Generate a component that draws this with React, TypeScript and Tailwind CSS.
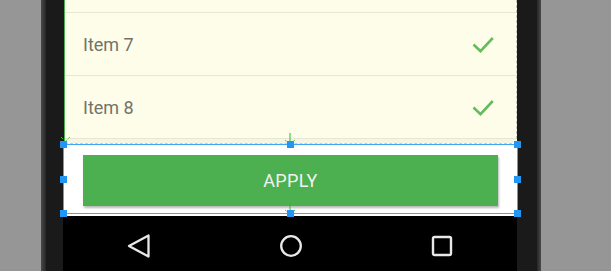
import React from 'react';

const items = ['Item 7', 'Item 8'];

function Check() {
  return (
    <svg width="22" height="17" viewBox="0 0 22 17" fill="none">
      <polyline points="1.5,8.5 8.5,15.2 20.8,2" stroke="#66bb5c" strokeWidth="2.6" />
    </svg>
  );
}

function Handle({ className }: { className: string }) {
  return <div className={`absolute h-[7px] w-[7px] bg-[#2196f3] ${className}`} />;
}

function Anchor({ className }: { className: string }) {
  // little constraint arrow drawn by the layout editor
  return (
    <svg className={`absolute ${className}`} width="14" height="11" viewBox="0 0 14 11" fill="none">
      <line x1="7" y1="0" x2="7" y2="10" stroke="#2eb82e" strokeWidth="1" />
      <line x1="2" y1="7" x2="5" y2="9.5" stroke="#2eb82e" strokeWidth="1" strokeDasharray="1 1" />
      <line x1="12" y1="7" x2="9" y2="9.5" stroke="#2eb82e" strokeWidth="1" strokeDasharray="1 1" />
    </svg>
  );
}

export default function App() {
  return (
    <div className="flex h-[271px] w-[611px] overflow-hidden bg-[#969696]" style={{ fontFamily: 'Roboto, "Noto Sans", sans-serif' }}>
      <div className="w-[41px] shrink-0" />
      <div className="w-[5px] shrink-0 bg-gradient-to-r from-[#4a4a4a] to-[#262626]" />
      <div className="w-[17px] shrink-0 bg-[#1a1a1a]" />

      {/* device screen */}
      <div className="relative flex w-[454px] shrink-0 flex-col">
        <div className="flex h-[144px]">
          <div className="w-[1px] bg-[#1a1a1a]" />
          <div className="w-[1px] bg-[#4caf50]" />
          <div className="flex flex-1 flex-col border-b border-r border-dashed border-b-[#cfcfbd] border-r-[#c6c6b8] bg-[#fdfdea]">
            <div className="h-[12px] shrink-0" />
            {items.map((item) => (
              <div key={item} className="flex h-[63px] shrink-0 items-center justify-between border-t border-[#e7e7d3] pl-[18px] pr-[22px]">
                <span className="text-[18px] text-[#737369]">{item}</span>
                <Check />
              </div>
            ))}
            <div className="flex-1 border-t border-[#e7e7d3] bg-[#f5f5e3]" />
          </div>
        </div>

        <div className="h-[72px] bg-white pl-[20px] pr-[19px] pt-[11px]">
          <button className="flex h-[51px] w-full items-center justify-center bg-[#4caf50] text-[18px] tracking-[0.3px] text-[#f2f2f2] shadow-[1px_2px_2px_rgba(0,0,0,0.28)]">
            APPLY
          </button>
        </div>

        <div className="flex flex-1 items-center justify-around bg-black pt-[5px]">
          <svg width="24" height="24" viewBox="0 0 24 24" fill="none">
            <polygon points="2,12 21.5,1.5 21.5,22.5" stroke="#e8e8e8" strokeWidth="2.3" strokeLinejoin="round" />
          </svg>
          <svg width="24" height="24" viewBox="0 0 24 24" fill="none">
            <circle cx="12" cy="12" r="9.8" stroke="#e8e8e8" strokeWidth="2.3" />
          </svg>
          <svg width="22" height="22" viewBox="0 0 22 22" fill="none">
            <rect x="2" y="2" width="18" height="18" rx="1.5" stroke="#e8e8e8" strokeWidth="2.4" />
          </svg>
        </div>

        {/* selection box of the layout editor */}
        <div className="pointer-events-none absolute left-0 top-[144px] h-[70px] w-[455px] border border-[#3fa7f5]" />
        <Anchor className="left-[220px] top-[133px]" />
        <Anchor className="left-[220px] top-[203px]" />
        <svg className="absolute left-[-4px] top-[136px]" width="12" height="8" viewBox="0 0 12 8" fill="none">
          <line x1="2" y1="1" x2="4" y2="3" stroke="#2eb82e" strokeWidth="1" />
          <line x1="11" y1="1" x2="7" y2="5" stroke="#2eb82e" strokeWidth="1" strokeDasharray="1 1" />
        </svg>
        <Handle className="left-[-3px] top-[141px]" />
        <Handle className="left-[224px] top-[141px]" />
        <Handle className="left-[451px] top-[141px]" />
        <Handle className="left-[-3px] top-[176px]" />
        <Handle className="left-[451px] top-[176px]" />
        <Handle className="left-[-3px] top-[210px]" />
        <Handle className="left-[224px] top-[210px]" />
        <Handle className="left-[451px] top-[210px]" />
      </div>

      <div className="w-[20px] shrink-0 bg-[#1a1a1a]" />
      <div className="w-[4px] shrink-0 bg-gradient-to-r from-[#262626] to-[#4a4a4a]" />
      <div className="flex-1" />
    </div>
  );
}
